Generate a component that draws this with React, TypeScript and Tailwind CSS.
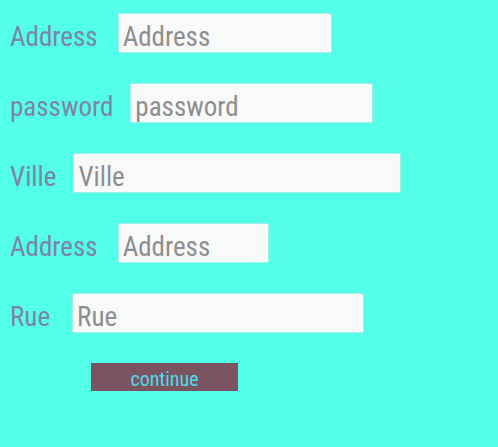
const fields = [
  { label: 'Address', width: 'w-[214px]', gap: 'ml-[20px]' },
  { label: 'password', width: 'w-[243px]', gap: 'ml-[17px]' },
  { label: 'Ville', width: 'w-[328px]', gap: 'ml-[17px]' },
  { label: 'Address', width: 'w-[151px]', gap: 'ml-[20px]' },
  { label: 'Rue', width: 'w-[292px]', gap: 'ml-[22px]' },
];

export default function App() {
  return (
    <div className="min-h-[447px] bg-[#53ffe8] pl-[10px] pt-[13px] font-['Roboto_Condensed','Roboto',sans-serif] [font-stretch:condensed]">
      {fields.map((f, i) => (
        <div key={i} className="flex items-baseline h-10 mb-[30px]">
          <label className="text-[27px] leading-none text-[#7c84a8]">{f.label}</label>
          <input
            placeholder={f.label}
            className={`${f.width} ${f.gap} h-10 px-[4px] pt-[8px] bg-[#f8fafa] border border-[#a6ece4] rounded-[2px] text-[27px] leading-none text-[#555] placeholder:text-[#8e8e8e] outline-none`}
          />
        </div>
      ))}
      <button className="ml-[81px] w-[147px] h-7 bg-[#7b5462] text-[#4fdcec] text-[20px] leading-none pt-[4px]">
        continue
      </button>
    </div>
  );
}
